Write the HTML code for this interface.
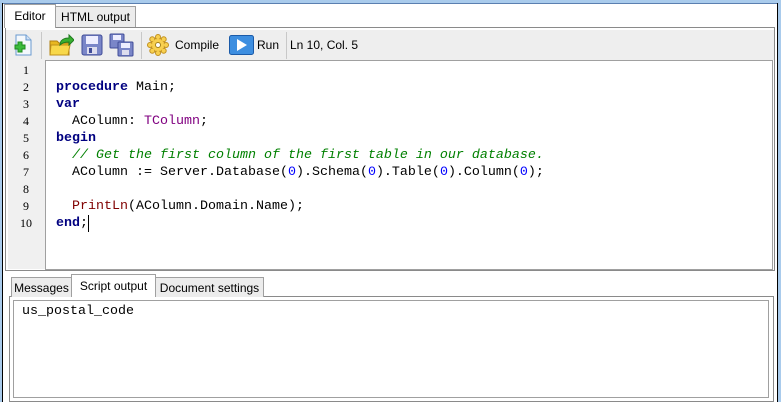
<!DOCTYPE html>
<html><head><meta charset="utf-8"><style>
*{margin:0;padding:0;box-sizing:border-box}
body{width:781px;height:402px;overflow:hidden;background:#fff;position:relative;font-family:"Liberation Sans",sans-serif;font-size:12px;color:#000}
.abs{position:absolute;white-space:nowrap}
.code{font-family:"Liberation Mono",monospace;font-size:13.33px;white-space:pre;line-height:17px}
.k{color:#000080;font-weight:bold}
.t{color:#800080}
.c{color:#008000;font-style:italic}
.f{color:#800000}
.n{color:#0000ff}
.ln{font-family:"Liberation Serif",serif;font-size:12px;text-align:center;width:38px;line-height:17px}
.tab{position:absolute;font-size:12px;border:1px solid #a0a0a0;border-bottom:none;background:#ececec;text-align:center;white-space:nowrap}
</style></head><body>
<div class="abs" style="left:0;top:0;width:781px;height:3px;background:#a9cbec"></div>
<div class="abs" style="left:0;top:3px;width:781px;height:1px;background:#5a7fb0"></div>
<div class="abs" style="left:0;top:0;width:2px;height:402px;background:#a9cbec"></div>
<div class="abs" style="left:2px;top:3px;width:1px;height:399px;background:#000"></div>
<div class="abs" style="left:777px;top:3px;width:1px;height:399px;background:#000"></div>
<div class="abs" style="left:778px;top:0;width:3px;height:402px;background:#a9cbec"></div>

<div class="abs" style="left:5px;top:27px;width:770px;height:244px;border:1px solid #8a8a8a"></div>
<div class="tab" style="left:55px;top:6px;width:81px;height:21px;line-height:20px">HTML output</div>
<div class="tab" style="left:4px;top:4px;width:52px;height:24px;background:#fff;line-height:22px;z-index:2">Editor</div>
<div class="abs" style="left:6px;top:30px;width:768px;height:30px;background:#eeeeee"></div>
<div class="abs" style="left:41px;top:32px;width:1px;height:27px;background:#c8c8c8"></div>
<div class="abs" style="left:141px;top:32px;width:1px;height:27px;background:#c8c8c8"></div>
<div class="abs" style="left:286px;top:32px;width:1px;height:27px;background:#c8c8c8"></div>
<svg class="abs" style="left:10px;top:33px" width="24" height="24"><path d="M6 2h10l5 5v15H6z" fill="#f4f8fc" stroke="#6a9ad0"/><path d="M16 2v5h5" fill="#cfe0f4" stroke="#6a9ad0"/><path d="M5 12h3v-3h4v3h3v4h-3v3H8v-3H5z" fill="#3cbc3c" stroke="#1e8a1e"/></svg>
<svg class="abs" style="left:48px;top:33px" width="26" height="24"><path d="M2 8h7l2 2h10v12H2z" fill="#e8b820" stroke="#b08010"/><path d="M3 12h19l-2 10H2z" fill="#f8d84a" stroke="#c09018"/><path d="M12 12c0-5 4-7 9-7V2l5 5-5 5V9c-4 0-7 1-9 3z" fill="#38b030" stroke="#207a20"/></svg>
<svg class="abs" style="left:80px;top:33px" width="24" height="24"><rect x="2" y="2" width="20" height="20" rx="2" fill="#7a86c8" stroke="#404c98"/><rect x="6" y="3" width="12" height="8" fill="#eef"/><rect x="7" y="14" width="10" height="7" fill="#dde"/><rect x="9" y="15" width="3" height="5" fill="#404c98"/></svg>
<svg class="abs" style="left:109px;top:33px" width="26" height="24"><rect x="1" y="1" width="14" height="14" rx="1" fill="#7a86c8" stroke="#404c98"/><rect x="4" y="2" width="8" height="5" fill="#eef"/><rect x="9" y="9" width="15" height="14" rx="1" fill="#7a86c8" stroke="#404c98"/><rect x="12" y="10" width="9" height="5" fill="#eef"/><rect x="13" y="17" width="7" height="5" fill="#dde"/></svg>
<svg class="abs" style="left:147px;top:34px" width="22" height="22"><g fill="#f8d050" stroke="#c09020"><circle cx="11" cy="11" r="7"/><circle cx="11" cy="3" r="2.5"/><circle cx="11" cy="19" r="2.5"/><circle cx="3" cy="11" r="2.5"/><circle cx="19" cy="11" r="2.5"/><circle cx="5.3" cy="5.3" r="2.5"/><circle cx="16.7" cy="16.7" r="2.5"/><circle cx="5.3" cy="16.7" r="2.5"/><circle cx="16.7" cy="5.3" r="2.5"/></g><circle cx="11" cy="11" r="6" fill="#f8d050"/><circle cx="11" cy="11" r="2.5" fill="#fff" stroke="#a08020"/></svg>
<div class="abs" style="left:175px;top:38px">Compile</div>
<svg class="abs" style="left:229px;top:35px" width="25" height="20"><rect x="0.5" y="0.5" width="24" height="19" rx="2" fill="#3d8ee0" stroke="#1a5aa8"/><path d="M8 4l10 6-10 6z" fill="#fff"/></svg>
<div class="abs" style="left:257px;top:38px">Run</div>
<div class="abs" style="left:290px;top:38px">Ln 10, Col. 5</div>

<div class="abs" style="left:8px;top:60px;width:38px;height:209px;background:#f0f0f0"></div>
<div class="abs" style="left:45px;top:60px;width:728px;height:210px;border:1px solid #a0a0a0;background:#fff"></div>
<div class="abs ln" style="left:7px;top:62px">1<br>2<br>3<br>4<br>5<br>6<br>7<br>8<br>9<br>10</div>
<div class="abs code" style="left:56px;top:62px">
<span class="k">procedure</span> Main;
<span class="k">var</span>
  AColumn: <span class="t">TColumn</span>;
<span class="k">begin</span>
  <span class="c">// Get the first column of the first table in our database.</span>
  AColumn := Server.Database(<span class="n">0</span>).Schema(<span class="n">0</span>).Table(<span class="n">0</span>).Column(<span class="n">0</span>);

  <span class="f">PrintLn</span>(AColumn.Domain.Name);
<span class="k">end</span>;</div>
<div class="abs" style="left:88px;top:215px;width:1px;height:17px;background:#000"></div>

<div class="abs" style="left:9px;top:296px;width:765px;height:106px;border:1px solid #8a8a8a"></div>
<div class="abs" style="left:13px;top:300px;width:756px;height:98px;border:1px solid #a0a0a0"></div>
<div class="tab" style="left:11px;top:277px;width:61px;height:20px;line-height:20px">Messages</div>
<div class="tab" style="left:155px;top:277px;width:109px;height:20px;line-height:20px">Document settings</div>
<div class="tab" style="left:71px;top:274px;width:85px;height:23px;background:#fff;line-height:22px;z-index:2">Script output</div>
<div class="abs code" style="left:22px;top:303px">us_postal_code</div>
</body></html>
